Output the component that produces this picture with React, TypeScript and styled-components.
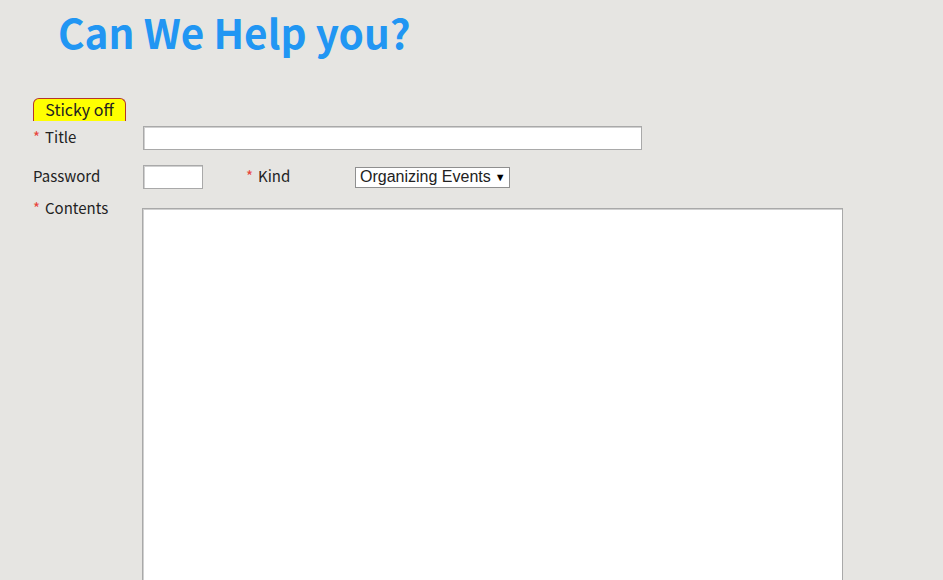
import React from "react";
import styled, { createGlobalStyle } from "styled-components";

const Global = createGlobalStyle`
  html, body { margin: 0; padding: 0; background: #e6e5e2; }
  body { font-family: "Noto Sans CJK KR", "Noto Sans", sans-serif; color: #222; }
  * { box-sizing: border-box; }
`;

const Page = styled.div`
  width: 943px;
  height: 580px;
  overflow: hidden;
  padding: 0 0 0 33px;
`;

const Heading = styled.h1`
  margin: 0;
  padding: 7px 0 0 25px;
  height: 98px;
  font-size: 40.5px;
  line-height: 50px;
  font-weight: 700;
  color: #2196f3;
`;

const Tab = styled.div`
  width: 93px;
  height: 23px;
  background: #ffff00;
  border: 1px solid #b5352b;
  border-bottom: none;
  border-radius: 6px 6px 0 0;
  font-size: 16px;
  line-height: 21px;
  text-align: center;
  color: #222;
`;

const Row = styled.div<{ $top: number; $align?: string }>`
  display: flex;
  align-items: ${(p) => p.$align || "center"};
  margin-top: ${(p) => p.$top}px;
`;

const Label = styled.label<{ $width: number }>`
  width: ${(p) => p.$width}px;
  flex: none;
  font-size: 15px;
  line-height: 20px;
  padding-bottom: 2px;
  color: #222;
`;

const Star = styled.span`
  color: #e8443b;
  margin-right: 5px;
`;

const TextInput = styled.input<{ $width: number }>`
  width: ${(p) => p.$width}px;
  height: 24px;
  margin: 0;
  border: 1px solid #a9a9a9;
  box-shadow: inset 1px 1px 0 #d0d0d0;
  background: #fff;
  font-size: 14px;
  padding: 0 4px;
  outline: none;
  flex: none;
`;

const Select = styled.div`
  display: flex;
  align-items: center;
  width: 155px;
  height: 21px;
  margin-left: 1px;
  border: 1px solid #8f8f8f;
  background: #fff;
  font-family: "Liberation Sans", Arial, sans-serif;
  font-size: 16px;
  color: #222;
  padding: 0 0 0 4px;
  white-space: nowrap;
`;

const Caret = styled.span`
  font-size: 11px;
  margin-left: 4px;
  color: #000;
`;

const Spacer = styled.div<{ $width: number }>`
  width: ${(p) => p.$width}px;
  flex: none;
`;

const TextArea = styled.textarea`
  width: 701px;
  height: 400px;
  margin: 10px 0 0 -1px;
  border: 1px solid #a9a9a9;
  box-shadow: inset 1px 1px 0 #d0d0d0;
  background: #fff;
  resize: none;
  outline: none;
  flex: none;
`;

export default function App() {
  return (
    <Page>
      <Global />
      <Heading>Can We Help you?</Heading>
      <Tab>Sticky off</Tab>
      <Row $top={5}>
        <Label $width={110}>
          <Star>*</Star>Title
        </Label>
        <TextInput $width={499} />
      </Row>
      <Row $top={15}>
        <Label $width={110}>Password</Label>
        <TextInput $width={60} type="password" />
        <Spacer $width={43} />
        <Label $width={108}>
          <Star>*</Star>Kind
        </Label>
        <Select>
          Organizing Events<Caret>▼</Caret>
        </Select>
      </Row>
      <Row $top={9} $align="flex-start">
        <Label $width={110}>
          <Star>*</Star>Contents
        </Label>
        <TextArea />
      </Row>
    </Page>
  );
}
